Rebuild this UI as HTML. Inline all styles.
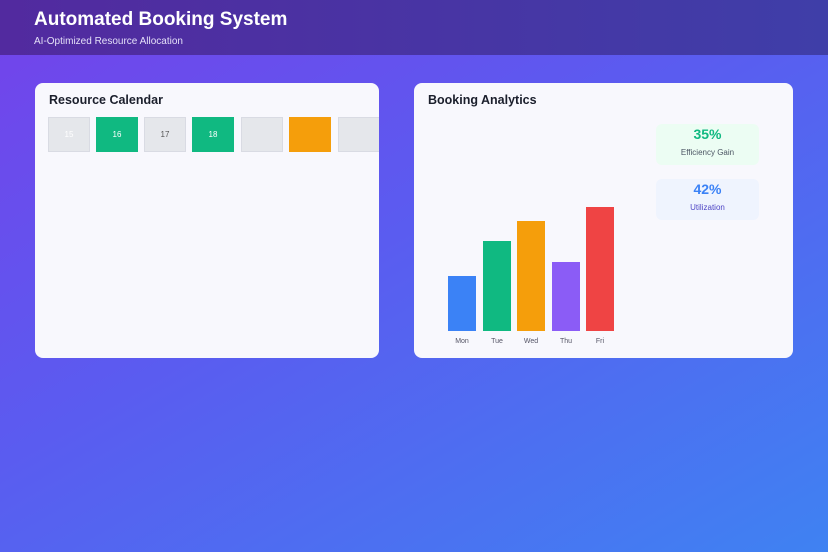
<!DOCTYPE html>
<html><head><meta charset="utf-8"><style>
*{margin:0;padding:0;box-sizing:border-box}
body{width:828px;height:552px;overflow:hidden;font-family:"Liberation Sans",sans-serif;background:linear-gradient(150deg,#7442ea 0%,#5a5cf0 45%,#3f82f2 100%);position:relative}
.hdr{position:absolute;left:0;top:0;width:828px;height:55px;background:linear-gradient(90deg,#522a9f,#3f3ea8)}
.hdr h1{position:absolute;left:34px;top:9px;font-size:19px;font-weight:bold;color:#fff}
.hdr p{position:absolute;left:34px;top:36px;font-size:10px;color:#e4e0f8}
.card{position:absolute;top:83px;height:275px;background:#f8f8fd;border-radius:8px;overflow:hidden}
.card h2{position:absolute;left:14px;top:10px;font-size:12.5px;font-weight:bold;color:#1b1f2c}
.cell{position:absolute;top:34px;width:42px;height:35px;background:#e5e7eb;border:1px solid #d9dbe3;font-size:8px;color:#555;text-align:center;line-height:33px}
.g{background:#10b981;color:#fff;border-color:#10b981}
.o{background:#f59e0b;border-color:#f59e0b}
.bar{position:absolute;bottom:27px;width:28px}
.lbl{position:absolute;top:255px;width:28px;text-align:center;font-size:7px;color:#556}
.stat{position:absolute;left:242px;width:103px;height:41px;border-radius:6px;text-align:center}
.stat b{display:block;font-size:14px;margin-top:2px}
.stat span{font-size:8px}
</style></head><body>
<div class="hdr"><h1>Automated Booking System</h1><p>AI-Optimized Resource Allocation</p></div>
<div class="card" style="left:35px;width:344px">
<h2>Resource Calendar</h2>
<div class="cell" style="left:13px;color:#fff">15</div>
<div class="cell g" style="left:61px">16</div>
<div class="cell" style="left:109px">17</div>
<div class="cell g" style="left:157px">18</div>
<div class="cell" style="left:206px"></div>
<div class="cell o" style="left:254px"></div>
<div class="cell" style="left:303px"></div>
</div>
<div class="card" style="left:414px;width:379px">
<h2>Booking Analytics</h2>
<div class="bar" style="left:34px;height:55px;background:#3b82f6"></div>
<div class="bar" style="left:69px;height:90px;background:#10b981"></div>
<div class="bar" style="left:103px;height:110px;background:#f59e0b"></div>
<div class="bar" style="left:138px;height:69px;background:#8b5cf6"></div>
<div class="bar" style="left:172px;height:124px;background:#ef4444"></div>
<div class="lbl" style="left:34px">Mon</div>
<div class="lbl" style="left:69px">Tue</div>
<div class="lbl" style="left:103px">Wed</div>
<div class="lbl" style="left:138px">Thu</div>
<div class="lbl" style="left:172px">Fri</div>
<div class="stat" style="top:41px;background:#ecfdf3"><b style="color:#10b981">35%</b><span style="color:#4b5563">Efficiency Gain</span></div>
<div class="stat" style="top:96px;background:#eff4fe"><b style="color:#3b82f6">42%</b><span style="color:#4f46c5">Utilization</span></div>
</div>
</body></html>
